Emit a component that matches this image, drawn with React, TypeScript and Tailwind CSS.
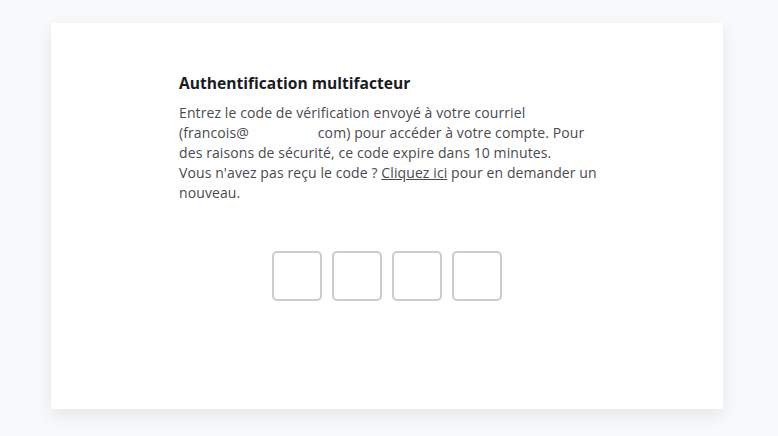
export default function App() {
  return (
    <div
      className="min-h-screen w-full bg-[#f8f9fb] pt-[23px] pl-[51px]"
      style={{ fontFamily: "'Open Sans', 'Noto Sans', sans-serif" }}
    >
      <div className="w-[672px] h-[386px] bg-white shadow-[0_6px_16px_rgba(0,0,0,0.08)] pl-[128px] pr-[100px] pt-[49px]">
        <h1 className="text-[15.6px] font-bold text-[#1b1b1f] leading-[22px]">
          Authentification multifacteur
        </h1>
        <p className="mt-[9px] text-[14px] tracking-[0.1px] leading-[20px] text-[#4a4a4f] whitespace-nowrap">
          Entrez le code de vérification envoyé à votre courriel
          <br />
          (francois@<span className="inline-block w-[69px]"></span>com) pour accéder à votre compte. Pour
          <br />
          des raisons de sécurité, ce code expire dans 10 minutes.
          <br />
          Vous n'avez pas reçu le code ?{" "}
          <a className="underline cursor-pointer">Cliquez ici</a> pour en demander un
          <br />
          nouveau.
        </p>

        {/* code inputs */}
        <div className="mt-[48px] flex gap-[10px] pl-[93px]">
          {[0, 1, 2, 3].map((i) => (
            <input
              key={i}
              maxLength={1}
              className="w-[50px] h-[50px] rounded-[5px] border-2 border-[#cccccc] text-center text-lg outline-none"
            />
          ))}
        </div>
      </div>
    </div>
  );
}
